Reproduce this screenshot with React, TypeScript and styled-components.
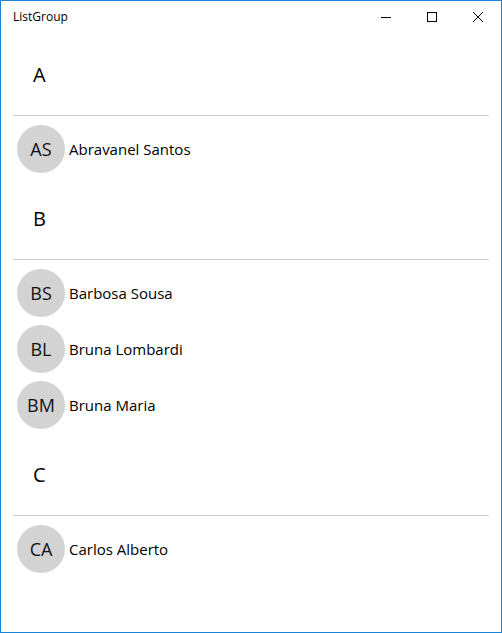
import styled, { createGlobalStyle } from "styled-components";

const GlobalStyle = createGlobalStyle`
  html, body {
    margin: 0;
    padding: 0;
    background: #fff;
  }
  body {
    font-family: "Open Sans", "Noto Sans", "DejaVu Sans", sans-serif;
    color: #000;
  }
`;

interface Person {
  initials: string;
  name: string;
}

interface Group {
  key: string;
  people: Person[];
}

const groups: Group[] = [
  { key: "A", people: [{ initials: "AS", name: "Abravanel Santos" }] },
  {
    key: "B",
    people: [
      { initials: "BS", name: "Barbosa Sousa" },
      { initials: "BL", name: "Bruna Lombardi" },
      { initials: "BM", name: "Bruna Maria" },
    ],
  },
  { key: "C", people: [{ initials: "CA", name: "Carlos Alberto" }] },
];

const App = () => {
  return (
    <>
      <GlobalStyle />
      <Window>
        <TitleBar>
          <Title>ListGroup</Title>
          <Controls>
            <ControlButton aria-label="Minimize">
              <svg width="10" height="10" viewBox="0 0 10 10">
                <line x1="0" y1="5.5" x2="10" y2="5.5" stroke="#000" strokeWidth="1" />
              </svg>
            </ControlButton>
            <ControlButton aria-label="Maximize">
              <svg width="10" height="10" viewBox="0 0 10 10">
                <rect x="0.5" y="0.5" width="9" height="9" fill="none" stroke="#000" strokeWidth="1" />
              </svg>
            </ControlButton>
            <ControlButton aria-label="Close">
              <svg width="10" height="10" viewBox="0 0 10 10">
                <path d="M0 0 L10 10 M10 0 L0 10" stroke="#000" strokeWidth="1" />
              </svg>
            </ControlButton>
          </Controls>
        </TitleBar>
        <List>
          {groups.map((group) => (
            <section key={group.key}>
              <GroupHeader>
                <GroupLabel>{group.key}</GroupLabel>
                <Divider />
              </GroupHeader>
              {group.people.map((person) => (
                <Item key={person.name}>
                  <Avatar>{person.initials}</Avatar>
                  <Name>{person.name}</Name>
                </Item>
              ))}
            </section>
          ))}
        </List>
      </Window>
    </>
  );
};

const Window = styled.div`
  box-sizing: border-box;
  width: 502px;
  height: 633px;
  border: 1px solid #1883d7;
  display: flex;
  flex-direction: column;
  background: #fff;
  overflow: hidden;
`;

const TitleBar = styled.div`
  height: 31px;
  display: flex;
  align-items: center;
  flex-shrink: 0;
`;

const Title = styled.div`
  flex: 1;
  padding-left: 12px;
  font-size: 12px;
  line-height: 16px;
`;

const Controls = styled.div`
  display: flex;
  height: 100%;
`;

const ControlButton = styled.div`
  width: 46px;
  height: 100%;
  display: flex;
  align-items: center;
  justify-content: center;
`;

const List = styled.div`
  flex: 1;
  padding: 1px 12px 0;
`;

const GroupHeader = styled.div`
  height: 88px;
  display: flex;
  flex-direction: column;
`;

const GroupLabel = styled.div`
  height: 82px;
  display: flex;
  align-items: center;
  padding-left: 20px;
  box-sizing: border-box;
  font-size: 20px;
`;

const Divider = styled.div`
  height: 1px;
  background: #cccccc;
`;

const Item = styled.div`
  height: 56px;
  display: flex;
  align-items: center;
  padding-left: 4px;
`;

const Avatar = styled.div`
  width: 48px;
  height: 48px;
  border-radius: 50%;
  background: #d3d3d3;
  display: flex;
  align-items: center;
  justify-content: center;
  font-size: 18px;
  color: #111;
  flex-shrink: 0;
`;

const Name = styled.div`
  margin-left: 4px;
  font-size: 15px;
`;

export default App;
